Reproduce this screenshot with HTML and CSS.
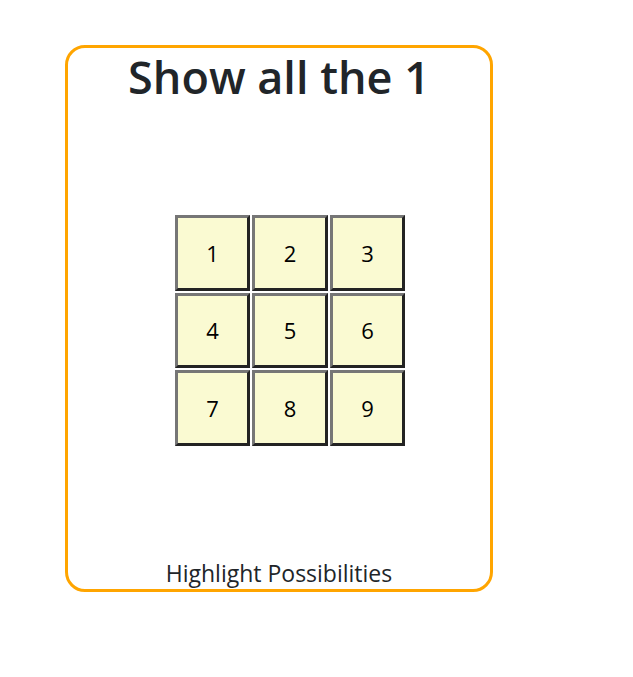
FILE: index.html
```html
<!DOCTYPE html>
<html>
<head>
<meta charset="utf-8">
<link rel="stylesheet" href="styles.css">
</head>
<body>
<div class="card">
  <h1 class="title">Show all the 1</h1>
  <table class="grid">
    <tr><td>1</td><td>2</td><td>3</td></tr>
    <tr><td>4</td><td>5</td><td>6</td></tr>
    <tr><td>7</td><td>8</td><td>9</td></tr>
  </table>
  <div class="label">Highlight Possibilities</div>
</div>
</body>
</html>
```
FILE: styles.css
```css
body {
  margin: 8px;
  background: #fff;
  font-family: "Open Sans", "Noto Sans", sans-serif;
  color: #212529;
}
.card {
  box-sizing: border-box;
  width: 428px;
  height: 547px;
  margin: 37px 0 0 57px;
  border: 3px solid #ffa500;
  border-radius: 20px;
  display: flex;
  flex-direction: column;
  align-items: center;
}
.title {
  margin: 3px 0 0;
  font-size: 45px;
  font-weight: 600;
  line-height: 52px;
  color: #212529;
}
.grid {
  margin-top: 110px;
  margin-left: 22px;
  border-spacing: 2px;
}
.grid td {
  box-sizing: border-box;
  width: 75.5px;
  height: 75.5px;
  padding: 0;
  text-align: center;
  vertical-align: middle;
  font-size: 22px;
  color: #000;
  background: #fafad2;
  border: 3px solid;
  border-color: #767676 #232323 #232323 #767676;
}
.label {
  margin-top: auto;
  margin-bottom: 3px;
  font-size: 23px;
  line-height: 26px;
  color: #212529;
}
```
